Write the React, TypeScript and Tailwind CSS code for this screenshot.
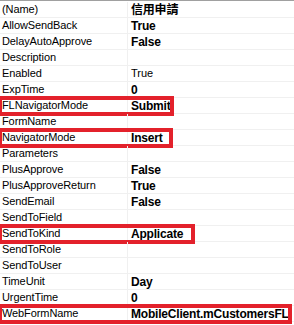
type Row = {
  name: string;
  value?: string;
  bold?: boolean;
  mark?: number;
};

const rows: Row[] = [
  { name: "(Name)", value: "信用申請", bold: true },
  { name: "AllowSendBack", value: "True", bold: true },
  { name: "DelayAutoApprove", value: "False", bold: true },
  { name: "Description" },
  { name: "Enabled", value: "True" },
  { name: "ExpTime", value: "0", bold: true },
  { name: "FLNavigatorMode", value: "Submit", bold: true, mark: 174 },
  { name: "FormName" },
  { name: "NavigatorMode", value: "Insert", bold: true, mark: 173 },
  { name: "Parameters" },
  { name: "PlusApprove", value: "False", bold: true },
  { name: "PlusApproveReturn", value: "True", bold: true },
  { name: "SendEmail", value: "False", bold: true },
  { name: "SendToField" },
  { name: "SendToKind", value: "Applicate", bold: true, mark: 195 },
  { name: "SendToRole" },
  { name: "SendToUser" },
  { name: "TimeUnit", value: "Day", bold: true },
  { name: "UrgentTime", value: "0", bold: true },
  { name: "WebFormName", value: "MobileClient.mCustomersFL", bold: true, mark: 292 },
];

export default function App() {
  return (
    <div className="w-[294px] h-[325px] overflow-hidden bg-white text-black font-['Liberation_Sans','Noto_Sans_CJK_TC',sans-serif] text-[11px] leading-none">
      <div className="h-[2px] border-t border-[#a0a0a0]" />
      {rows.map((row, index) => (
        <div
          key={"prop_row" + index}
          className="relative flex h-[16px] items-center border-b border-[#f0f0f0]"
        >
          <div className="flex h-full w-[128px] shrink-0 items-center border-r border-[#f0f0f0] pl-[2px] tracking-[-0.1px]">
            {row.name}
          </div>
          <div
            className={
              row.bold
                ? "pl-[3px] text-[12px] font-bold tracking-[-0.2px]"
                : "pl-[3px] text-[11px]"
            }
          >
            {row.value}
          </div>
          {row.mark && (
            <span
              className="pointer-events-none absolute left-0 top-[-2px] h-[20px] border-[4px] border-l-[2px] border-[#e3212b]"
              style={{ width: row.mark }}
            />
          )}
        </div>
      ))}
    </div>
  );
}
